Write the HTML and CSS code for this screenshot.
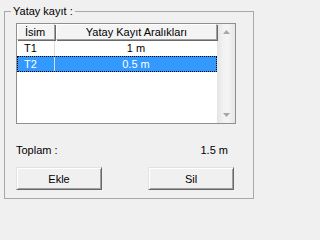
FILE: index.html
```html
<!DOCTYPE html>
<html>
<head>
<meta charset="utf-8">
<link rel="stylesheet" href="styles.css">
</head>
<body>
<fieldset class="group">
  <legend class="group-title">Yatay kayıt :</legend>
  <div class="list">
    <div class="list-body">
      <div class="header">
        <div class="hcell c1">İsim</div>
        <div class="hcell c2">Yatay Kayıt Aralıkları</div>
      </div>
      <div class="row">
        <div class="cell c1">T1</div>
        <div class="cell c2">1 m</div>
      </div>
      <div class="row selected">
        <div class="cell c1">T2</div>
        <div class="cell c2">0.5 m</div>
      </div>
    </div>
    <div class="scrollbar">
      <svg class="arrow" width="7" height="4" viewBox="0 0 7 4"><polygon points="0,4 7,4 3.5,0" fill="#a7a7a7"/></svg>
      <svg class="arrow" width="7" height="4" viewBox="0 0 7 4"><polygon points="0,0 7,0 3.5,4" fill="#a7a7a7"/></svg>
    </div>
  </div>
  <div class="total">
    <span>Toplam :</span>
    <span>1.5 m</span>
  </div>
  <div class="buttons">
    <button class="btn">Ekle</button>
    <button class="btn">Sil</button>
  </div>
</fieldset>
</body>
</html>
```

FILE: styles.css
```css
html, body {
  margin: 0;
  padding: 0;
  background: #f0f0f0;
}
body {
  font-family: "Liberation Sans", Arial, sans-serif;
  font-size: 11px;
  color: #000;
  width: 261px;
  height: 207px;
  overflow: hidden;
}
.group {
  margin: 4px 0 0 4px;
  padding: 0 0 8px 0;
  width: 248px;
  border: 1px solid #a8a8a8;
  min-width: 0;
}
.group-title {
  margin-left: 6px;
  padding: 0 2px;
  line-height: 14px;
  height: 14px;
}
.list {
  margin: 5px 0 0 11px;
  width: 218px;
  height: 99px;
  border: 1px solid #8f8f8f;
  background: #fff;
  display: flex;
}
.list-body {
  width: 200px;
  display: flex;
  flex-direction: column;
}
.header {
  display: flex;
  height: 16px;
}
.hcell {
  box-sizing: border-box;
  height: 16px;
  line-height: 14px;
  background: #f4f4f4;
  border-top: 1px solid #fff;
  border-left: 1px solid #fff;
  border-right: 1px solid #a0a0a0;
  border-bottom: 1px solid #a0a0a0;
  box-shadow: 1px 1px 0 #696969;
  position: relative;
}
.hcell.c1 {
  width: 38px;
  padding-left: 7px;
}
.hcell.c2 {
  width: 161px;
  margin-left: 1px;
  text-align: center;
}
.row {
  display: flex;
  height: 16px;
  line-height: 16px;
}
.cell {
  box-sizing: border-box;
  height: 16px;
}
.cell.c1 {
  width: 38px;
  padding-left: 7px;
  border-right: 1px solid #dcdcdc;
}
.cell.c2 {
  width: 162px;
  text-align: center;
}
.row.selected {
  background: #3399ff;
  color: #fff;
  outline: 1px dotted #000;
  outline-offset: -1px;
}
.scrollbar {
  width: 18px;
  height: 99px;
  box-sizing: border-box;
  background: linear-gradient(to right, #e4e4e4 0%, #f2f2f2 35%, #f4f4f4 60%, #e6e6e6 100%);
  display: flex;
  flex-direction: column;
  justify-content: space-between;
  align-items: center;
  padding: 6px 0 6px 1px;
}
.arrow {
  display: block;
}
.total {
  margin: 20px 0 0 11px;
  width: 212px;
  height: 13px;
  line-height: 13px;
  display: flex;
  justify-content: space-between;
}
.buttons {
  margin: 10px 0 0 11px;
  width: 218px;
  display: flex;
  justify-content: space-between;
}
.btn {
  box-sizing: border-box;
  width: 86px;
  height: 23px;
  margin: 0;
  padding: 0;
  font-family: "Liberation Sans", Arial, sans-serif;
  font-size: 11px;
  color: #000;
  background: #f0f0f0;
  border-style: solid;
  border-width: 1px;
  border-color: #e3e3e3 #696969 #696969 #e3e3e3;
  box-shadow: inset 1px 1px 0 #fff, inset -1px -1px 0 #a0a0a0;
}
```
